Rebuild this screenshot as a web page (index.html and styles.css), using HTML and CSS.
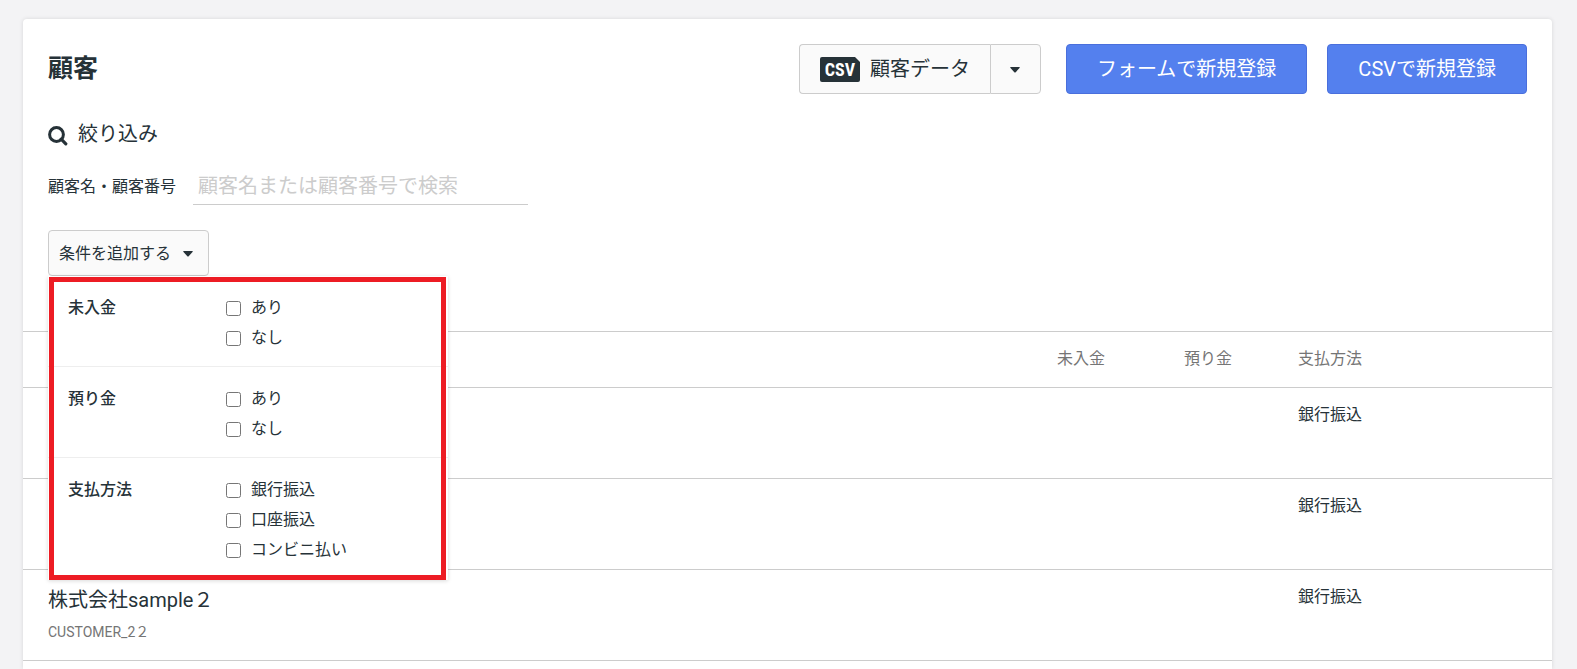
FILE: index.html
```html
<!DOCTYPE html>
<html lang="ja">
<head>
  <meta charset="UTF-8">
  <meta name="viewport" content="width=device-width, initial-scale=1">
  <title>顧客</title>
  <link rel="stylesheet" href="styles.css">
</head>
<body>
  <main class="card">
    <header class="page-header">
      <h1>顧客</h1>
      <div class="actions">
        <div class="btn-group">
          <button type="button" class="btn btn-default">
            <svg class="csv-icon" width="40" height="25" viewBox="0 0 40 25" aria-hidden="true">
              <path d="M2 0H35L40 5V23a2 2 0 0 1-2 2H2a2 2 0 0 1-2-2V2a2 2 0 0 1 2-2z"/>
              <text x="20" y="19" text-anchor="middle">CSV</text>
            </svg>
            顧客データ
          </button>
          <button type="button" class="btn btn-default btn-toggle" aria-label="メニュー">
            <svg class="caret" width="10" height="6" viewBox="0 0 10 6" aria-hidden="true"><path d="M1 0H9Q10.5 0 9.5 1L5.7 5.2Q5 6 4.3 5.2L.5 1Q-.5 0 1 0z"/></svg>
          </button>
        </div>
        <button type="button" class="btn btn-primary">フォームで新規登録</button>
        <button type="button" class="btn btn-primary">CSVで新規登録</button>
      </div>
    </header>

    <section class="filter">
      <h2>
        <svg width="20" height="20" viewBox="0 0 20 20" aria-hidden="true">
          <circle cx="8.5" cy="8.5" r="6.9" fill="none" stroke="currentColor" stroke-width="3"/>
          <path d="M13.2 13.2L17.8 17.8" stroke="currentColor" stroke-width="3.2" stroke-linecap="round"/>
        </svg>
        絞り込み
      </h2>
      <div class="search-row">
        <label for="keyword">顧客名・顧客番号</label>
        <input type="text" id="keyword" placeholder="顧客名または顧客番号で検索">
      </div>
      <div class="dropdown">
        <button type="button" class="btn btn-default btn-small">
          条件を追加する
          <svg class="caret" width="10" height="6" viewBox="0 0 10 6" aria-hidden="true"><path d="M1 0H9Q10.5 0 9.5 1L5.7 5.2Q5 6 4.3 5.2L.5 1Q-.5 0 1 0z"/></svg>
        </button>
        <div class="dropdown-menu">
          <fieldset>
            <legend>未入金</legend>
            <div class="options">
              <label><input type="checkbox" name="unpaid"> あり</label>
              <label><input type="checkbox" name="unpaid"> なし</label>
            </div>
          </fieldset>
          <fieldset>
            <legend>預り金</legend>
            <div class="options">
              <label><input type="checkbox" name="deposit"> あり</label>
              <label><input type="checkbox" name="deposit"> なし</label>
            </div>
          </fieldset>
          <fieldset>
            <legend>支払方法</legend>
            <div class="options">
              <label><input type="checkbox" name="method"> 銀行振込</label>
              <label><input type="checkbox" name="method"> 口座振込</label>
              <label><input type="checkbox" name="method"> コンビニ払い</label>
            </div>
          </fieldset>
          <div class="highlight"></div>
        </div>
      </div>
    </section>

    <table class="customers">
      <thead>
        <tr>
          <th class="col-name"></th>
          <th class="col-amount">未入金</th>
          <th class="col-amount">預り金</th>
          <th class="col-method">支払方法</th>
        </tr>
      </thead>
      <tbody>
        <tr>
          <td class="col-name"></td>
          <td class="col-amount"></td>
          <td class="col-amount"></td>
          <td class="col-method">銀行振込</td>
        </tr>
        <tr>
          <td class="col-name"></td>
          <td class="col-amount"></td>
          <td class="col-amount"></td>
          <td class="col-method">銀行振込</td>
        </tr>
        <tr>
          <td class="col-name">
            <div class="name">株式会社sample２</div>
            <div class="code">CUSTOMER_2２</div>
          </td>
          <td class="col-amount"></td>
          <td class="col-amount"></td>
          <td class="col-method">銀行振込</td>
        </tr>
      </tbody>
    </table>
  </main>
</body>
</html>
```

FILE: styles.css
```css
* {
  box-sizing: border-box;
}
body {
  margin: 0;
  padding: 19px 25px 0 23px;
  min-height: 100vh;
  display: flex;
  flex-direction: column;
  background: #f3f3f5;
  color: #263238;
  font-family: Roboto, "Noto Sans CJK JP", sans-serif;
  font-size: 16px;
  line-height: 24px;
}
button, input {
  font-family: inherit;
  color: inherit;
}
.card {
  flex: 1;
  background: #fff;
  border-radius: 4px 4px 0 0;
  box-shadow: 0 0 4px rgba(0, 0, 0, 0.12);
}

/* header */
.page-header {
  display: flex;
  justify-content: space-between;
  align-items: center;
  padding: 25px 25px 0;
}
h1 {
  margin: 0;
  font-size: 25px;
  font-weight: bold;
}
.actions {
  display: flex;
}
.btn {
  display: flex;
  align-items: center;
  justify-content: center;
  height: 50px;
  padding: 0 30px 3px;
  border: 1px solid #ccc;
  border-radius: 4px;
  font-size: 20px;
  white-space: nowrap;
  cursor: pointer;
}
.btn-default {
  background: #fafafa;
}
.btn-primary {
  margin-left: 20px;
  background: #5480ee;
  border-color: #4a6fdc;
  color: #fff;
}
.btn-group {
  display: flex;
  margin-right: 5px;
}
.btn-group .btn {
  gap: 10px;
  padding: 0 20px 3px;
}
.btn-group .btn:first-child {
  border-right: 0;
  border-radius: 4px 0 0 4px;
}
.btn-group .btn-toggle {
  width: 51px;
  padding: 0 1px 3px 0;
  border-radius: 0 4px 4px 0;
}
.csv-icon {
  margin-top: 3px;
}
.csv-icon path {
  fill: #263238;
}
.csv-icon text {
  fill: #fff;
  font-family: "Liberation Sans Narrow", "Roboto Condensed", Roboto, sans-serif;
  font-size: 18px;
  font-weight: bold;
}
.caret {
  margin-top: 4px;
  fill: #263238;
}

/* filter */
.filter {
  padding: 24px 25px 55px;
}
h2 {
  display: flex;
  align-items: center;
  gap: 10px;
  height: 32px;
  margin: 0;
  font-size: 20px;
  font-weight: normal;
}
h2 svg {
  margin-top: 4px;
}
.search-row {
  display: flex;
  align-items: center;
  gap: 17px;
  margin: 18px 0 25px;
}
.search-row input {
  width: 335px;
  height: 37px;
  padding: 0 5px;
  border: 0;
  border-bottom: 1px solid #ccc;
  background: none;
  font-size: 20px;
}
.search-row input::placeholder {
  color: #ccc;
}
.dropdown {
  position: relative;
}
.btn-small {
  gap: 12px;
  height: 46px;
  padding: 0 15px 3px 10px;
  font-size: 16px;
}
.dropdown-menu {
  position: absolute;
  top: 46px;
  left: 0;
  width: 400px;
  background: #fff;
  box-shadow: 0 1px 4px rgba(0, 0, 0, 0.15);
}
fieldset {
  display: flex;
  margin: 0;
  padding: 17px 20px 13px;
  border: 0;
  border-bottom: 1px solid #eee;
}
fieldset:last-of-type {
  padding-bottom: 15px;
  border-bottom: 0;
}
legend {
  float: left;
  width: 158px;
  padding: 0;
  line-height: 30px;
  font-weight: 500;
}
.options label {
  display: flex;
  align-items: center;
  gap: 10px;
  height: 30px;
}
.options input {
  width: 15px;
  height: 15px;
  margin: 1px 0 0;
}
.highlight {
  position: absolute;
  top: 1px;
  bottom: 0;
  left: 1px;
  right: 2px;
  border: 5px solid #ed1c24;
  pointer-events: none;
}

/* list */
.customers {
  width: 100%;
  border-collapse: collapse;
  border-top: 1px solid #ccc;
}
.customers th,
.customers td {
  border-bottom: 1px solid #ccc;
  text-align: left;
  vertical-align: top;
}
.customers th {
  height: 56px;
  padding: 15px 33px;
  color: #757575;
  font-weight: normal;
}
.customers td {
  height: 91px;
  padding: 15px 33px;
}
.customers .col-name {
  padding-left: 25px;
}
.customers .col-amount {
  width: 127px;
  padding-left: 0;
  text-align: right;
}
.customers .col-method {
  width: 287px;
}
.name {
  font-size: 20px;
  line-height: 30px;
}
.code {
  margin-top: 5px;
  color: #757575;
  font-size: 14px;
}
```
